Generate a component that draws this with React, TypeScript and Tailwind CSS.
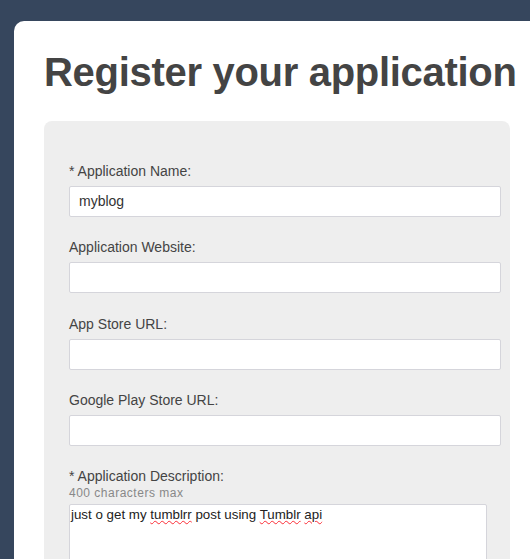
import React from 'react';

const font = { fontFamily: '"Liberation Sans", Arial, sans-serif' };

function Field({ label }: { label: string }) {
  return (
    <div className="mb-[20.33px]">
      <label className="block text-[14px] leading-[20px] text-[#444] mb-[5px]">{label}</label>
      <div className="h-[31px] w-[432px] rounded-[2px] border border-[#d5d5db] bg-white" />
    </div>
  );
}

export default function App() {
  return (
    <div className="min-h-[559px] overflow-hidden bg-[#36465d] pl-[14px] pt-[21px]" style={font}>
      <div className="min-h-[560px] rounded-tl-[10px] bg-white pl-[30px] pt-[31px]">
        <h1 className="text-[40px] font-bold leading-[40px] tracking-[-0.3px] text-[#444] whitespace-nowrap">
          Register your application
        </h1>

        {/* form panel */}
        <div className="mt-[29px] w-[466px] rounded-[8px] bg-[#eeeeee] pl-[25px] pt-[40px] pb-[20px]">
          <div className="mb-[20.33px]">
            <label className="block text-[14px] leading-[20px] text-[#444] mb-[5px]">* Application Name:</label>
            <div className="flex h-[31px] w-[432px] items-center rounded-[2px] border border-[#d5d5db] bg-white pl-[9px] text-[14px] text-[#333]">
              myblog
            </div>
          </div>
          <Field label="Application Website:" />
          <Field label="App Store URL:" />
          <Field label="Google Play Store URL:" />

          <div>
            <label className="block text-[14px] leading-[20px] text-[#444]">* Application Description:</label>
            <div className="text-[12px] leading-[15px] tracking-[0.5px] text-[#888] mb-[3px]">400 characters max</div>
            <div className="h-[90px] w-[418px] rounded-[2px] border border-[#d5d5db] bg-white px-[1px] pt-[2px] text-[13.33px] leading-[16px] text-[#222]">
              just o get my{' '}
              <span className="underline decoration-wavy decoration-red-500 decoration-1">tumblrr</span> post using{' '}
              <span className="underline decoration-wavy decoration-red-500 decoration-1">Tumblr</span>{' '}
              <span className="underline decoration-wavy decoration-red-500 decoration-1">api</span>
            </div>
          </div>
        </div>
      </div>
    </div>
  );
}
